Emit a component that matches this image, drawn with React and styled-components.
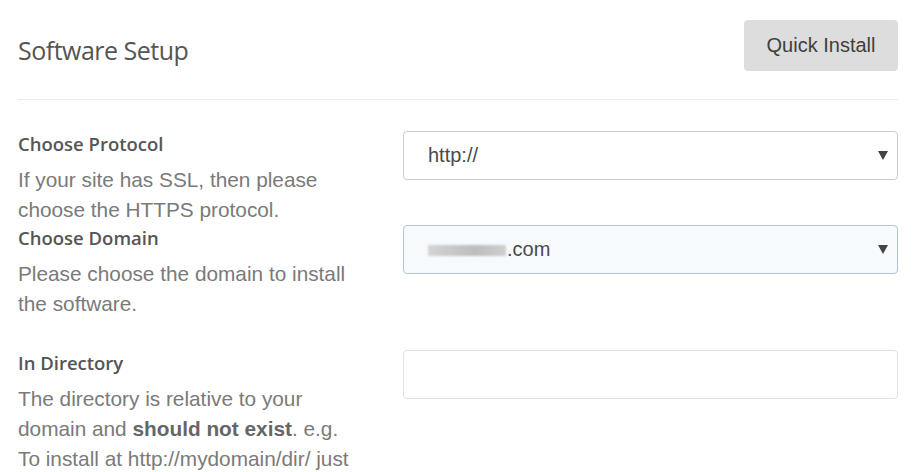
import React from "react";
import styled, { createGlobalStyle } from "styled-components";

const Global = createGlobalStyle`
    html, body {
        margin: 0;
        padding: 0;
        background: #fff;
    }
    body {
        font-family: "Liberation Sans", Arial, sans-serif;
    }
`;

const Page = styled.div`
    width: 880px;
    padding: 20px 24px 0 18px;
`;

const Header = styled.div`
    display: flex;
    align-items: center;
    justify-content: space-between;
    padding-bottom: 28px;
    border-bottom: 1px solid #ebebeb;
`;

const Title = styled.h2`
    margin: 0;
    padding-top: 9px;
    font-family: "Open Sans", sans-serif;
    font-weight: 400;
    font-size: 25px;
    letter-spacing: -0.5px;
    color: #555;
`;

const QuickButton = styled.button`
    height: 51px;
    width: 154px;
    border: none;
    border-radius: 4px;
    background: #dddddd;
    color: #3f3f3f;
    font-family: "Liberation Sans", Arial, sans-serif;
    font-size: 20px;
    cursor: pointer;
`;

const Rows = styled.div`
    padding-top: 31px;
`;

const Row = styled.div`
    display: flex;
    align-items: flex-start;
    margin-bottom: ${(p) => p.gap || 0}px;
`;

const Info = styled.div`
    width: 385px;
    padding-right: 41px;
    box-sizing: border-box;
    flex-shrink: 0;
`;

const Label = styled.div`
    font-family: "Open Sans", sans-serif;
    font-weight: 600;
    font-size: 18.5px;
    line-height: 26px;
    color: #555;
`;

const Desc = styled.div`
    margin-top: 8px;
    font-size: 20.8px;
    line-height: 30px;
    color: #7a7a7a;

    b {
        color: #666;
    }
`;

const Control = styled.div`
    flex: 1;
    height: 49px;
    display: flex;
    align-items: center;
    justify-content: space-between;
    box-sizing: border-box;
    padding: 0 9px 0 24px;
    border: 1px solid ${(p) => (p.focused ? "#b3c4d4" : p.empty ? "#e2e2e2" : "#cccccc")};
    border-radius: 4px;
    background: ${(p) => (p.focused ? "#f7fafd" : "#fff")};
    font-size: 20px;
    color: #4a4a4a;
`;

const Blur = styled.span`
    display: inline-block;
    width: 78px;
    height: 11px;
    margin-right: 1px;
    vertical-align: middle;
    background: linear-gradient(90deg, #d4d4d4, #bdbdbd 60%, #cfcfcf);
    filter: blur(1px);
`;

const Caret = () => (
    <svg width="10" height="9" viewBox="0 0 10 9">
        <polygon points="0,0 10,0 5,9" fill="#444" />
    </svg>
);

export default function App() {
    return (
        <Page>
            <Global />
            <Header>
                <Title>Software Setup</Title>
                <QuickButton>Quick Install</QuickButton>
            </Header>
            <Rows>
                <Row>
                    <Info>
                        <Label>Choose Protocol</Label>
                        <Desc>
                            If your site has SSL, then please choose the HTTPS
                            protocol.
                        </Desc>
                    </Info>
                    <Control>
                        <span>http://</span>
                        <Caret />
                    </Control>
                </Row>
                <Row gap={31}>
                    <Info>
                        <Label>Choose Domain</Label>
                        <Desc>Please choose the domain to install the software.</Desc>
                    </Info>
                    <Control focused>
                        <span>
                            <Blur />
                            .com
                        </span>
                        <Caret />
                    </Control>
                </Row>
                <Row>
                    <Info>
                        <Label>In Directory</Label>
                        <Desc>
                            The directory is relative to your domain and{" "}
                            <b>should not exist</b>. e.g. To install at
                            http://mydomain/dir/ just
                        </Desc>
                    </Info>
                    <Control empty />
                </Row>
            </Rows>
        </Page>
    );
}
